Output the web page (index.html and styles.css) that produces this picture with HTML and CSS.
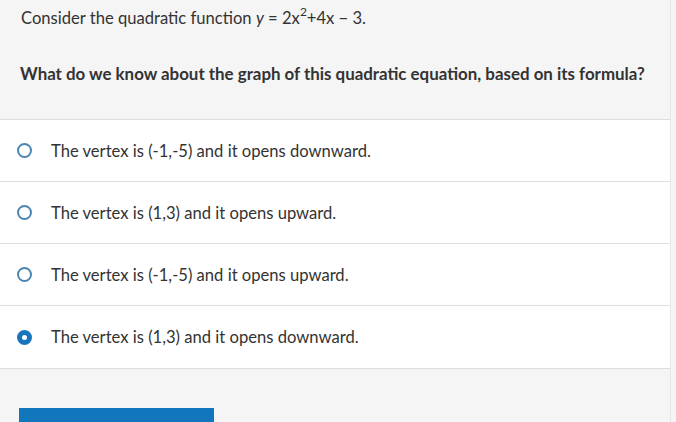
FILE: index.html
```html
<!DOCTYPE html>
<html>
<head>
<meta charset="utf-8">
<link rel="stylesheet" href="styles.css">
</head>
<body>
<div class="page">
  <div class="prompt">
    <p class="intro">Consider the quadratic function <span class="math"><i>y</i> = 2<span class="x">x</span><sup>2</sup>+4<span class="x">x</span> − 3</span>.</p>
    <p class="question">What do we know about the graph of this quadratic equation, based on its formula?</p>
  </div>
  <ul class="options">
    <li class="option"><span class="radio"></span><span class="label">The vertex is (-1,-5) and it opens downward.</span></li>
    <li class="option"><span class="radio"></span><span class="label">The vertex is (1,3) and it opens upward.</span></li>
    <li class="option"><span class="radio"></span><span class="label">The vertex is (-1,-5) and it opens upward.</span></li>
    <li class="option"><span class="radio checked"></span><span class="label">The vertex is (1,3) and it opens downward.</span></li>
  </ul>
  <div class="footer">
    <div class="submit"></div>
  </div>
</div>
</body>
</html>
```

FILE: styles.css
```css
html, body {
  margin: 0;
  padding: 0;
  background: #f5f5f5;
  height: 100%;
  overflow: hidden;
}
body {
  font-family: "Lato", "Liberation Sans", sans-serif;
  color: #333;
}
.page {
  width: 670px;
  border-right: 1px solid #e6e6e6;
  background: #f5f5f5;
  min-height: 422px;
}
.prompt {
  padding: 7px 20px 0 21px;
  border-bottom: 1px solid #dedede;
  box-sizing: border-box;
  height: 120px;
}
.intro {
  margin: 0;
  font-size: 16.6px;
  line-height: 22px;
}
.math i {
  font-style: italic;
}
.math sup {
  font-size: 12px;
  line-height: 0;
  vertical-align: 8px;
}
.question {
  margin: 34px 0 0 -1px;
  font-size: 16.9px;
  font-weight: bold;
  line-height: 22px;
}
.options {
  list-style: none;
  margin: 0;
  padding: 0;
  background: #fff;
}
.option {
  height: 61px;
  border-bottom: 1px solid #dedede;
  display: flex;
  align-items: center;
  padding-left: 17px;
}
.option:last-child {
  height: 62px;
}
.radio {
  width: 11px;
  height: 11px;
  border: 2px solid #4a86b3;
  border-radius: 50%;
  flex: none;
  margin-right: 19px;
}
.radio.checked {
  background: #fff;
  border: 5px solid #1775bd;
  width: 5px;
  height: 5px;
}
.label {
  font-size: 16.6px;
  color: #333;
}
.footer {
  padding: 39px 0 0 19px;
}
.submit {
  width: 195px;
  height: 20px;
  background: #1176bc;
}
```
